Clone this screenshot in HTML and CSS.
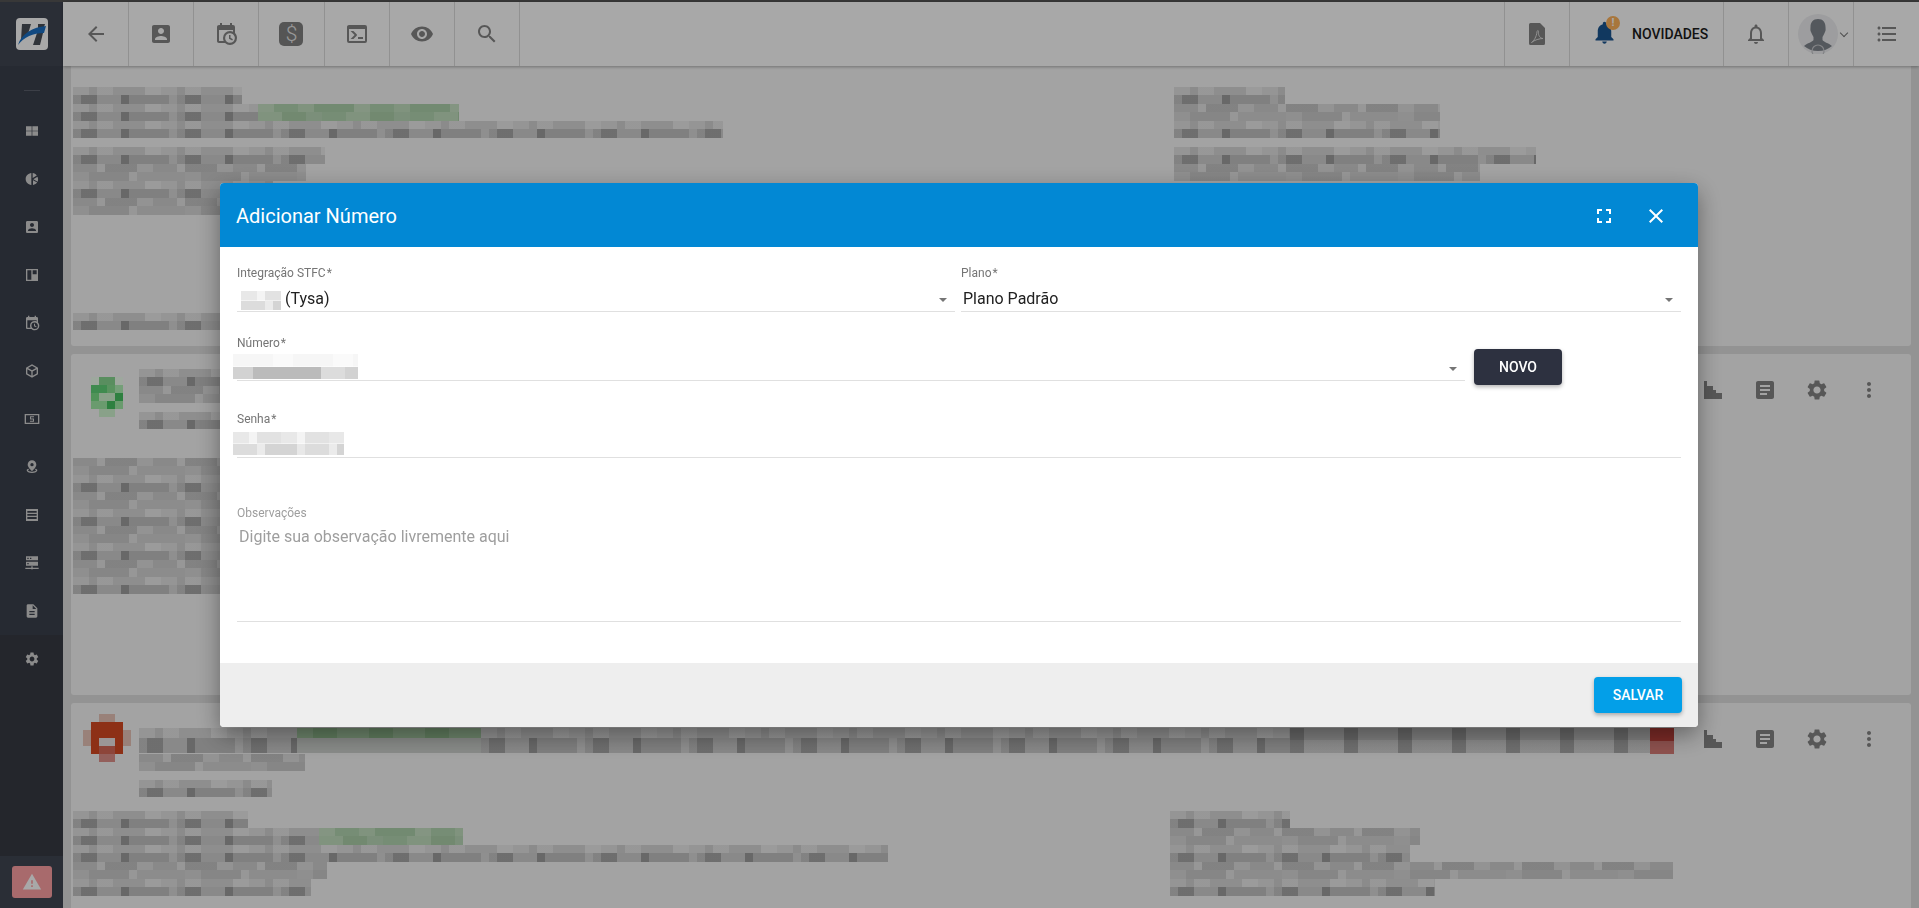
FILE: index.html
```html
<!DOCTYPE html>
<html lang="pt-BR">
<head>
    <meta charset="UTF-8">
    <title>Adicionar Número</title>
    <link rel="stylesheet" href="styles.css">
</head>
<body>
    <svg class="sprite" xmlns="http://www.w3.org/2000/svg">
        <symbol id="i-back" viewBox="0 0 24 24"><path d="M20 11H7.83l5.59-5.59L12 4l-8 8 8 8 1.41-1.41L7.83 13H20v-2z"/></symbol>
        <symbol id="i-contact" viewBox="0 0 24 24"><path d="M3 5v14c0 1.1.89 2 2 2h14c1.1 0 2-.9 2-2V5c0-1.1-.9-2-2-2H5c-1.11 0-2 .9-2 2zm12 4c0 1.66-1.34 3-3 3s-3-1.34-3-3 1.34-3 3-3 3 1.34 3 3zm-9 8c0-2 4-3.1 6-3.1s6 1.1 6 3.1v1H6v-1z"/></symbol>
        <symbol id="i-calendar" viewBox="0 0 24 24"><path d="M15,13H16.5V15.82L18.94,17.23L18.19,18.53L15,16.69V13M19,8H5V19H9.67C9.24,18.09 9,17.07 9,16A7,7 0 0,1 16,9C17.07,9 18.09,9.24 19,9.67V8M5,21C3.89,21 3,20.1 3,19V5C3,3.89 3.89,3 5,3H6V1H8V3H16V1H18V3H19A2,2 0 0,1 21,5V11.1C22.24,12.36 23,14.09 23,16A7,7 0 0,1 16,23C14.09,23 12.36,22.24 11.1,21H5M16,11.15A4.85,4.85 0 0,0 11.15,16C11.15,18.68 13.32,20.85 16,20.85A4.85,4.85 0 0,0 20.85,16C20.85,13.32 18.68,11.15 16,11.15Z"/></symbol>
        <symbol id="i-console" viewBox="0 0 24 24"><path d="M20,19V7H4V19H20M20,3A2,2 0 0,1 22,5V19A2,2 0 0,1 20,21H4A2,2 0 0,1 2,19V5C2,3.89 2.9,3 4,3H20M13,17V15H18V17H13M9.58,13L5.57,9H8.4L11.7,12.3C12.09,12.69 12.09,13.33 11.7,13.72L8.42,17H5.59L9.58,13Z"/></symbol>
        <symbol id="i-eye" viewBox="0 0 24 24"><path d="M12 4.5C7 4.5 2.73 7.61 1 12c1.73 4.39 6 7.5 11 7.5s9.27-3.11 11-7.5c-1.73-4.39-6-7.5-11-7.5zM12 17c-2.76 0-5-2.24-5-5s2.24-5 5-5 5 2.24 5 5-2.24 5-5 5zm0-8c-1.66 0-3 1.34-3 3s1.34 3 3 3 3-1.34 3-3-1.34-3-3-3z"/></symbol>
        <symbol id="i-search" viewBox="0 0 24 24"><path d="M15.5 14h-.79l-.28-.27C15.41 12.59 16 11.11 16 9.5 16 5.91 13.09 3 9.5 3S3 5.91 3 9.5 5.91 16 9.5 16c1.61 0 3.09-.59 4.23-1.57l.27.28v.79l5 4.99L20.49 19l-4.99-5zm-6 0C7.01 14 5 11.99 5 9.5S7.01 5 9.5 5 14 7.01 14 9.5 11.99 14 9.5 14z"/></symbol>
        <symbol id="i-pdf" viewBox="0 0 24 24"><path d="M15 1H5.500A1.500 1.500 0 0 0 4 2.500v19A1.500 1.500 0 0 0 5.500 23h13a1.500 1.500 0 0 0 1.500-1.500V6l-5-5z"/><path d="M6.500 20.500c2.500-1.500 5-6 5.500-10.500.2-2 1.800-2 1.500.5-.4 3 2 6 4.500 6-3.500 0-8.500 1.500-11.500 4z" fill="none" stroke="#dedede" stroke-width="1"/></symbol>
        <symbol id="i-bell-o" viewBox="0 0 24 24"><path d="M12 22c1.100 0 2-.9 2-2h-4c0 1.100.9 2 2 2zm6-6v-5c0-3.070-1.630-5.640-4.500-6.320V4c0-.83-.67-1.500-1.500-1.500s-1.500.67-1.500 1.500v.68C7.640 5.360 6 7.920 6 11v5l-2 2v1h16v-1l-2-2zm-2 1H8v-6c0-2.480 1.510-4.500 4-4.500s4 2.020 4 4.500v6z"/></symbol>
        <symbol id="i-bell" viewBox="0 0 24 24"><path d="M12 22c1.100 0 2-.9 2-2h-4c0 1.100.9 2 2 2zm6-6v-5c0-3.070-1.640-5.640-4.500-6.320V4c0-.83-.67-1.500-1.500-1.500s-1.500.67-1.500 1.500v.68C7.630 5.360 6 7.920 6 11v5l-2 2v1h16v-1l-2-2z"/></symbol>
        <symbol id="i-list" viewBox="0 0 24 24"><path d="M4 10.500c-.83 0-1.500.67-1.500 1.500s.67 1.500 1.500 1.500 1.500-.67 1.500-1.500-.67-1.500-1.500-1.500zm0-6c-.83 0-1.500.67-1.500 1.500S3.170 7.500 4 7.500 5.500 6.830 5.500 6 4.830 4.500 4 4.500zm0 12c-.83 0-1.500.68-1.500 1.500s.68 1.500 1.500 1.500 1.500-.68 1.500-1.500-.67-1.500-1.500-1.500zM7 19h14v-2H7v2zm0-6h14v-2H7v2zm0-8v2h14V5H7z"/></symbol>
        <symbol id="i-full" viewBox="0 0 24 24"><path d="M7 14H5v5h5v-2H7v-3zm-2-4h2V7h3V5H5v5zm12 7h-3v2h5v-5h-2v3zM14 5v2h3v3h2V5h-5z"/></symbol>
        <symbol id="i-close" viewBox="0 0 24 24"><path d="M19 6.410L17.590 5 12 10.590 6.410 5 5 6.410 10.590 12 5 17.590 6.410 19 12 13.410 17.590 19 19 17.590 13.410 12z"/></symbol>
        <symbol id="i-grid" viewBox="0 0 24 24"><path d="M3 5h8.500v6.500H3zM12.500 5H21v6.500h-8.500zM3 12.500h8.500V19H3zM12.500 12.500H21V19h-8.500z"/></symbol>
        <symbol id="i-pie" viewBox="0 0 24 24"><path d="M11 3v18c-4.800-.5-8.500-4.300-8.500-9S6.200 3.500 11 3zm2 0v7.500l6.200-3.600C17.700 4.700 15.500 3.300 13 3zm7.200 5.700L14 12.200l6.500 3.800c.9-2.300.8-5-.3-7.300zM13.500 14v7c2.700-.3 5-1.800 6.300-3.600z"/></symbol>
        <symbol id="i-quilt" viewBox="0 0 24 24"><path fill-rule="evenodd" d="M3 3h18v18H3zM5 5v14h6V5zM13 5v6h6V5z"/></symbol>
        <symbol id="i-cube" viewBox="0 0 24 24"><path d="M21,16.500C21,16.880 20.790,17.210 20.470,17.380L12.570,21.820C12.410,21.940 12.210,22 12,22C11.790,22 11.590,21.940 11.430,21.820L3.530,17.380C3.210,17.210 3,16.880 3,16.500V7.500C3,7.120 3.210,6.790 3.530,6.620L11.430,2.180C11.590,2.060 11.790,2 12,2C12.210,2 12.410,2.060 12.570,2.180L20.470,6.620C20.790,6.790 21,7.120 21,7.500V16.500M12,4.150L6.040,7.500L12,10.850L17.960,7.500L12,4.150M5,15.910L11,19.290V12.580L5,9.210V15.910M19,15.910V9.210L13,12.580V19.290L19,15.910Z"/></symbol>
        <symbol id="i-cash" viewBox="0 0 24 24"><path fill-rule="evenodd" d="M1 4.500h22v15H1zM3 6.500v11h18v-11z"/><path d="M9 8h6v1.500h-4.500v1.700H15V16H9v-1.500h4.500v-1.800H9z"/></symbol>
        <symbol id="i-pin" viewBox="0 0 24 24"><path fill-rule="evenodd" d="M12 2a6.500 6.500 0 0 1 6.500 6.500c0 4-6.500 9.500-6.500 9.500S5.500 12.500 5.500 8.500A6.500 6.500 0 0 1 12 2zm0 4a2.500 2.500 0 1 0 0 5 2.500 2.500 0 0 0 0-5z"/><path d="M4 17c0-1 1-1.800 2.500-2.300l1 1.300C6.500 16.300 6 16.700 6 17c0 .9 2.700 2 6 2s6-1.100 6-2c0-.3-.5-.7-1.500-1l1-1.300C19 15.200 20 16 20 17c0 2.500-3.600 4-8 4s-8-1.500-8-4z"/></symbol>
        <symbol id="i-rows" viewBox="0 0 24 24"><path fill-rule="evenodd" d="M3 3h18v18H3zM5 6v2.500h14V6zM5 10.500V13h14v-2.500zM5 15v3h14v-3z"/></symbol>
        <symbol id="i-server" viewBox="0 0 24 24"><path fill-rule="evenodd" d="M3 2h18v6H3zM5 4v2h2V4zM9 4v2h2V4zM3 10h18v6H3zM5 12v2h2v-2z"/><path d="M11 17h2v2h9v2h-9.500v1h-1v-1H2v-2h9z"/></symbol>
        <symbol id="i-doc" viewBox="0 0 24 24"><path d="M14 2H6c-1.100 0-2 .9-2 2v16c0 1.100.9 2 2 2h12c1.100 0 2-.9 2-2V8l-6-6zm2 16H8v-2h8v2zm0-4H8v-2h8v2zm-3-5V3.500L18.500 9H13z"/></symbol>
        <symbol id="i-gear" viewBox="0 0 24 24"><path d="M19.140 12.940c.04-.3.06-.61.06-.94 0-.32-.02-.64-.07-.94l2.030-1.580a.49.49 0 0 0 .12-.61l-1.920-3.320a.488.488 0 0 0-.59-.22l-2.390.96c-.5-.38-1.030-.7-1.620-.94l-.36-2.540a.484.484 0 0 0-.48-.41h-3.840c-.24 0-.43.17-.47.41l-.36 2.540c-.59.24-1.130.57-1.620.94l-2.390-.96c-.22-.08-.47 0-.59.22L2.740 8.870c-.12.21-.08.47.12.61l2.030 1.580c-.05.3-.09.63-.09.94s.02.64.07.94l-2.030 1.580a.49.49 0 0 0-.12.61l1.920 3.320c.12.22.37.29.59.22l2.390-.96c.5.38 1.030.7 1.620.94l.36 2.540c.05.24.24.41.48.41h3.840c.24 0 .44-.17.47-.41l.36-2.540c.59-.24 1.130-.56 1.620-.94l2.390.96c.22.08.47 0 .59-.22l1.920-3.320c.12-.22.07-.47-.12-.61l-2.010-1.580zM12 15.600c-1.980 0-3.600-1.620-3.600-3.600s1.620-3.600 3.600-3.600 3.600 1.620 3.600 3.600-1.620 3.600-3.600 3.600z"/></symbol>
        <symbol id="i-warn" viewBox="0 0 24 24"><path d="M1 21h22L12 2 1 21zm12-3h-2v-2h2v2zm0-4h-2v-4h2v4z"/></symbol>
        <symbol id="i-note" viewBox="0 0 24 24"><path d="M19 3H5c-1.100 0-2 .9-2 2v14c0 1.100.9 2 2 2h14c1.100 0 2-.9 2-2V5c0-1.100-.9-2-2-2zm-5 14H7v-2h7v2zm3-4H7v-2h10v2zm0-4H7V7h10v2z"/></symbol>
        <symbol id="i-steps" viewBox="0 0 24 24"><path d="M3 3h3v5h6v4h3v3h6v6H3z"/></symbol>
        <symbol id="i-more" viewBox="0 0 24 24"><path d="M12 8c1.100 0 2-.9 2-2s-.9-2-2-2-2 .9-2 2 .9 2 2 2zm0 2c-1.100 0-2 .9-2 2s.9 2 2 2 2-.9 2-2-.9-2-2-2zm0 6c-1.100 0-2 .9-2 2s.9 2 2 2 2-.9 2-2-.9-2-2-2z"/></symbol>
    </svg>

    <div class="topline"></div>
    <div class="shell">
        <!-- Sidebar -->
        <aside class="sidebar">
            <div class="brand">
                <div class="logo">
                    <svg viewBox="0 0 32 32" width="32" height="32">
                        <path d="M6 6h9l-3 10-7 6zM22 6h7l-1 3-6 3zM21 15h6l-3 12h-7z" fill="#4a4f58"/>
                        <path d="M2 27C5 16 17 9 30 8l-2 7C17 15 8 19 2 27z" fill="#1a6fc4"/>
                    </svg>
                </div>
            </div>
            <div class="side-rule"></div>
            <nav class="side-nav">
                <a class="side-item"><svg><use href="#i-grid"/></svg></a>
                <a class="side-item"><svg><use href="#i-pie"/></svg></a>
                <a class="side-item"><svg><use href="#i-contact"/></svg></a>
                <a class="side-item"><svg><use href="#i-quilt"/></svg></a>
                <a class="side-item"><svg><use href="#i-calendar"/></svg></a>
                <a class="side-item"><svg><use href="#i-cube"/></svg></a>
                <a class="side-item"><svg><use href="#i-cash"/></svg></a>
                <a class="side-item"><svg><use href="#i-pin"/></svg></a>
                <a class="side-item"><svg><use href="#i-rows"/></svg></a>
                <a class="side-item"><svg><use href="#i-server"/></svg></a>
                <a class="side-item"><svg><use href="#i-doc"/></svg></a>
            </nav>
            <div class="side-low">
                <a class="side-item"><svg><use href="#i-gear"/></svg></a>
            </div>
            <div class="side-foot">
                <div class="alert-btn"><svg><use href="#i-warn"/></svg></div>
            </div>
        </aside>

        <div class="main">
            <!-- Toolbar -->
            <header class="toolbar">
                <a class="tool"><svg><use href="#i-back"/></svg></a>
                <a class="tool"><svg><use href="#i-contact"/></svg></a>
                <a class="tool"><svg><use href="#i-calendar"/></svg></a>
                <a class="tool"><span class="dollar">$</span></a>
                <a class="tool"><svg><use href="#i-console"/></svg></a>
                <a class="tool"><svg><use href="#i-eye"/></svg></a>
                <a class="tool"><svg><use href="#i-search"/></svg></a>
                <div class="tool-right">
                    <a class="tool tool-first"><svg><use href="#i-pdf"/></svg></a>
                    <a class="tool tool-news">
                        <span class="news-bell">
                            <svg><use href="#i-bell"/></svg>
                            <span class="news-badge">!</span>
                        </span>
                        <span class="news-text">NOVIDADES</span>
                    </a>
                    <a class="tool"><svg><use href="#i-bell-o"/></svg></a>
                    <a class="tool tool-user">
                        <svg class="avatar" viewBox="0 0 40 40" width="40" height="40">
                            <circle cx="20" cy="20" r="20" fill="#eeeff1"/>
                            <path d="M20 5c5 0 7.500 3.500 7.500 8 0 2 .5 3-.5 5-.7 1.500-1.500 3.500-2.500 5v3c1 2 6 3 9.500 6-3.500 3-8.500 5-14 5s-10.500-2-14-5c3.500-3 8.500-4 9.500-6v-3c-1-1.500-1.800-3.500-2.500-5-1-2-.5-3-.5-5 0-4.500 2.500-8 7.500-8z" fill="#80868e"/>
                            <circle cx="20" cy="37" r="6" fill="none" stroke="#c6c8cc" stroke-width="1.200"/>
                        </svg>
                        <span class="chev"></span>
                    </a>
                    <a class="tool"><svg><use href="#i-list"/></svg></a>
                </div>
            </header>

            <!-- Cards behind the dialog, content is pixelated -->
            <div class="cards">
                <section class="card card-one">
                    <div class="columns">
                        <div>
                            <div class="group">
                                <div class="ln w169"></div>
                                <div class="row"><div class="ln w185"></div><div class="ln gr w201"></div></div>
                                <div class="ln w650"></div>
                            </div>
                            <div class="group">
                                <div class="ln w252"></div>
                                <div class="ln w233"></div>
                                <div class="ln w200"></div>
                                <div class="ln w233"></div>
                            </div>
                            <div class="foot-line"><div class="ln w169"></div></div>
                        </div>
                        <div>
                            <div class="group">
                                <div class="ln w111"></div>
                                <div class="ln w266"></div>
                                <div class="ln w266"></div>
                            </div>
                            <div class="group">
                                <div class="ln w362"></div>
                                <div class="ln w306"></div>
                            </div>
                        </div>
                    </div>
                </section>

                <section class="card card-two">
                    <div class="card-head">
                        <svg class="thumb" viewBox="0 0 32 40" width="32" height="40">
                            <rect x="0" y="0" width="8" height="8" fill="#f0fff0"/>
                            <rect x="8" y="0" width="16" height="8" fill="#88d890"/>
                            <rect x="24" y="0" width="8" height="8" fill="#f0fff0"/>
                            <rect x="0" y="8" width="16" height="8" fill="#60d478"/>
                            <rect x="16" y="8" width="8" height="8" fill="#88e090"/>
                            <rect x="24" y="8" width="8" height="8" fill="#b0f2b6"/>
                            <rect x="0" y="16" width="8" height="8" fill="#7cdf88"/>
                            <rect x="8" y="16" width="16" height="8" fill="#d1f5d1"/>
                            <rect x="24" y="16" width="8" height="8" fill="#47c261"/>
                            <rect x="0" y="24" width="16" height="8" fill="#a1eca7"/>
                            <rect x="16" y="24" width="8" height="8" fill="#47c261"/>
                            <rect x="24" y="24" width="8" height="8" fill="#a1eca7"/>
                            <rect x="8" y="32" width="16" height="8" fill="#d1f5d1"/>
                        </svg>
                        <div class="head-text">
                            <div class="ln w300"></div>
                            <div class="ln w300"></div>
                            <div class="ln w300 gap9"></div>
                        </div>
                        <div class="card-actions">
                            <a><svg><use href="#i-steps"/></svg></a>
                            <a><svg><use href="#i-note"/></svg></a>
                            <a><svg><use href="#i-gear"/></svg></a>
                            <a><svg><use href="#i-more"/></svg></a>
                        </div>
                    </div>
                    <div class="ln w300"></div>
                    <div class="ln w300"></div>
                    <div class="ln w300"></div>
                    <div class="ln w300"></div>
                    <div class="ln w300"></div>
                    <div class="ln w300"></div>
                    <div class="ln w300"></div>
                    <div class="ln w300"></div>
                </section>

                <section class="card card-three">
                    <div class="card-head">
                        <svg class="thumb thumb-red" viewBox="0 0 48 48" width="48" height="48">
                            <rect x="16" width="16" height="48" fill="#e8c4b8"/>
                            <rect y="16" width="48" height="16" fill="#e8c4b8"/>
                            <rect x="8" y="8" width="32" height="32" fill="#d64a22"/>
                            <rect x="16" y="24" width="16" height="8" fill="#ece4e4"/>
                            <rect x="16" y="32" width="16" height="8" fill="#d66a58"/>
                            <rect x="16" y="40" width="16" height="8" fill="#e0908a"/>
                        </svg>
                        <div class="head-text head-text-wide">
                            <div class="row">
                                <div class="ln ln-tall w158"></div>
                                <div class="ln ln-tall gr w184"></div>
                                <div class="ln ln-tall w809"></div>
                                <div class="bars"></div>
                                <div class="red-box"></div>
                            </div>
                            <div class="ln w166"></div>
                            <div class="ln w133 gap9"></div>
                        </div>
                        <div class="card-actions">
                            <a><svg><use href="#i-steps"/></svg></a>
                            <a><svg><use href="#i-note"/></svg></a>
                            <a><svg><use href="#i-gear"/></svg></a>
                            <a><svg><use href="#i-more"/></svg></a>
                        </div>
                    </div>
                    <div class="columns columns-low">
                        <div>
                            <div class="ln w175"></div>
                            <div class="row"><div class="ln w246"></div><div class="ln gr w144"></div></div>
                            <div class="ln w815"></div>
                            <div class="ln w254"></div>
                            <div class="ln w238"></div>
                        </div>
                        <div>
                            <div class="ln w120"></div>
                            <div class="ln w250"></div>
                            <div class="ln w240"></div>
                            <div class="ln w503"></div>
                            <div class="ln w265"></div>
                        </div>
                    </div>
                </section>
            </div>
        </div>
    </div>

    <div class="backdrop"></div>

    <!-- Dialog -->
    <div class="dialog">
        <div class="dialog-head">
            <h2>Adicionar Número</h2>
            <a class="dialog-icon"><svg><use href="#i-full"/></svg></a>
            <a class="dialog-icon"><svg><use href="#i-close"/></svg></a>
        </div>
        <div class="dialog-body">
            <div class="form-row">
                <div class="field">
                    <label>Integração STFC <span class="req">*</span></label>
                    <div class="control">
                        <span class="hide hide-name"></span>
                        <span class="value">(Tysa)</span>
                        <span class="caret"></span>
                    </div>
                </div>
                <div class="field">
                    <label>Plano <span class="req">*</span></label>
                    <div class="control">
                        <span class="value value-plain">Plano Padrão</span>
                        <span class="caret"></span>
                    </div>
                </div>
            </div>
            <div class="form-row-number">
                <div class="field field-grow">
                    <label>Número <span class="req">*</span></label>
                    <div class="control">
                        <span class="hide hide-number"></span>
                        <span class="caret"></span>
                    </div>
                </div>
                <button class="btn btn-dark">NOVO</button>
            </div>
            <div class="field field-pass">
                <label>Senha <span class="req">*</span></label>
                <div class="control">
                    <span class="hide hide-pass"></span>
                </div>
            </div>
            <div class="field field-notes">
                <label class="label-off">Observações</label>
                <textarea placeholder="Digite sua observação livremente aqui"></textarea>
            </div>
        </div>
        <div class="dialog-foot">
            <button class="btn btn-save">SALVAR</button>
        </div>
    </div>
</body>
</html>
```

FILE: styles.css
```css
* {
    box-sizing: border-box;
}

html, body {
    height: 100%;
}

body {
    margin: 0;
    overflow: hidden;
    font-family: Roboto, "Liberation Sans", sans-serif;
    background: #e0e0e0;
}

.sprite {
    display: none;
}

.topline {
    height: 2px;
    background: #555;
}

.shell {
    display: flex;
    height: 906px;
}

/* Sidebar */
.sidebar {
    width: 63px;
    flex: none;
    display: flex;
    flex-direction: column;
    background: #3b404d;
}

.brand {
    height: 64px;
    flex: none;
    display: flex;
    align-items: center;
    justify-content: center;
    background: #414653;
}

.logo {
    width: 32px;
    height: 32px;
    border-radius: 4px;
    background: #fff;
}

.logo svg {
    display: block;
}

.side-rule {
    width: 16px;
    height: 1px;
    flex: none;
    margin: 24px auto 16px;
    background: #5b606c;
}

.side-item {
    height: 48px;
    flex: none;
    display: flex;
    align-items: center;
    justify-content: center;
}

.side-item svg {
    width: 16px;
    height: 16px;
    fill: #d4d4d4;
}

.side-low {
    flex: 1;
    background: #383a44;
}

.side-foot {
    height: 52px;
    flex: none;
    padding: 10px 12px;
    background: #414653;
}

.alert-btn {
    width: 40px;
    height: 32px;
    display: flex;
    align-items: center;
    justify-content: center;
    border-radius: 3px;
    background: #ffa2a5;
}

.alert-btn svg {
    width: 20px;
    height: 20px;
    fill: #fff;
}

/* Toolbar */
.main {
    flex: 1;
    min-width: 0;
}

.toolbar {
    height: 64px;
    display: flex;
    padding-left: 1px;
    background: #fff;
    box-shadow: 0 1px 3px rgba(0,0,0,.3);
    position: relative;
}

.tool {
    width: 65.15px;
    display: flex;
    align-items: center;
    justify-content: center;
    border-right: 1px solid #dcdcdc;
}

.tool svg {
    width: 24px;
    height: 24px;
    fill: #858585;
}

.dollar {
    width: 24px;
    height: 24px;
    border-radius: 5px;
    background: #828282;
    color: #e8e8e8;
    font-size: 21px;
    font-weight: 300;
    line-height: 24px;
    text-align: center;
}

.tool-right {
    margin-left: auto;
    display: flex;
}

.tool-right .tool {
    width: 65px;
}

.tool-right .tool:last-child {
    border-right: 0;
}

.tool-right .tool-first {
    width: 66px;
    border-left: 1px solid #dcdcdc;
}

.tool-right .tool-news {
    width: 154px;
    justify-content: flex-start;
    padding-left: 21px;
}

.news-bell {
    position: relative;
    width: 27px;
    height: 27px;
    margin-top: -3px;
}

.tool .news-bell svg {
    width: 27px;
    height: 27px;
    fill: #1a5590;
}

.news-badge {
    position: absolute;
    top: -3px;
    left: 15px;
    width: 14px;
    height: 14px;
    border-radius: 50%;
    background: #ffb35c;
    color: #fff;
    font-size: 11px;
    font-weight: 700;
    line-height: 14px;
    text-align: center;
}

.news-text {
    margin-left: 14px;
    margin-top: -1px;
    font-size: 14px;
    font-weight: 500;
    color: #1c1c1c;
}

.tool-user {
    gap: 2px;
    padding-left: 5px;
    justify-content: flex-start;
}

.tool .avatar {
    width: 40px;
    height: 40px;
    fill: none;
    margin-left: 4px;
}

.chev {
    width: 6px;
    height: 6px;
    margin: -3px 0 0 1px;
    border-right: 1px solid #777;
    border-bottom: 1px solid #777;
    transform: rotate(45deg);
}

/* Pixelated cards */
.cards {
    padding: 0 8px;
    height: 842px;
    overflow: hidden;
}

.card {
    background: #f8f8f8;
    border-radius: 0 0 3px 3px;
    margin-bottom: 8px;
    padding-left: 2px;
    overflow: hidden;
}

.card-one {
    height: 280px;
    padding-top: 21px;
}

.card-two {
    height: 341px;
    border-radius: 3px;
}

.card-three {
    height: 300px;
    border-radius: 3px;
}

.columns {
    display: grid;
    grid-template-columns: 1101px 1fr;
}

.columns-low {
    grid-template-columns: 1097px 1fr;
    padding-top: 4px;
}

.group {
    margin-bottom: 9px;
}

.foot-line {
    margin-top: 98px;
}

.row {
    display: flex;
}

.ln {
    height: 17px;
    background-image:
        repeating-linear-gradient(90deg, rgba(0,0,0,.09) 0 16px, rgba(0,0,0,.15) 16px 24px, rgba(0,0,0,.07) 24px 40px, rgba(0,0,0,.13) 40px 72px, rgba(0,0,0,.05) 72px 88px),
        repeating-linear-gradient(90deg, rgba(0,0,0,.2) 0 8px, rgba(0,0,0,.32) 8px 24px, rgba(0,0,0,.16) 24px 48px, rgba(0,0,0,.36) 48px 56px, rgba(0,0,0,.22) 56px 96px, rgba(0,0,0,.12) 96px 104px);
    background-size: 100% 8px, 100% 9px;
    background-position: 0 0, 0 8px;
    background-repeat: no-repeat;
}

.ln:nth-child(2n) {
    background-image:
        repeating-linear-gradient(90deg, rgba(0,0,0,.16) 0 24px, rgba(0,0,0,.08) 24px 32px, rgba(0,0,0,.2) 32px 64px, rgba(0,0,0,.1) 64px 80px),
        repeating-linear-gradient(90deg, rgba(0,0,0,.12) 0 16px, rgba(0,0,0,.18) 16px 56px, rgba(0,0,0,.08) 56px 64px, rgba(0,0,0,.14) 64px 112px);
}

.ln.gr {
    background-image:
        repeating-linear-gradient(90deg, #c9e3c6 0 16px, #b4d6b2 16px 40px, #c2dfc0 40px 56px, #aed2ac 56px 96px),
        repeating-linear-gradient(90deg, #c2dfc0 0 24px, #add1ab 24px 48px, #bbdab9 48px 64px, #b4d6b2 64px 88px);
}

.ln-tall {
    height: 25px;
    background-size: 100% 10px, 100% 15px;
    background-position: 0 0, 0 10px;
}

.row .gr.ln-tall {
    background-image:
        repeating-linear-gradient(90deg, #a8cda5 0 16px, #94c091 16px 40px, #a8cda5 40px 56px),
        repeating-linear-gradient(90deg, #d0d4d0, #d0d4d0);
}

.bars {
    width: 360px;
    height: 25px;
    background:
        repeating-linear-gradient(90deg, rgba(0,0,0,.3) 0 14px, rgba(0,0,0,.12) 14px 54px),
        repeating-linear-gradient(180deg, rgba(0,0,0,.1) 0 12px, rgba(0,0,0,.02) 12px 25px);
}

.red-box {
    width: 24px;
    height: 26px;
    background: linear-gradient(180deg, #c0423c 0 50%, #d97d78 50%);
}

.w111 { width: 111px; }
.w120 { width: 120px; }
.w133 { width: 133px; }
.w144 { width: 144px; }
.w158 { width: 158px; }
.w166 { width: 166px; }
.w169 { width: 169px; }
.w175 { width: 175px; }
.w184 { width: 184px; }
.w185 { width: 185px; }
.w200 { width: 200px; }
.w201 { width: 201px; }
.w233 { width: 233px; }
.w238 { width: 238px; }
.w240 { width: 240px; }
.w246 { width: 246px; }
.w250 { width: 250px; }
.w252 { width: 252px; }
.w254 { width: 254px; }
.w265 { width: 265px; }
.w266 { width: 266px; }
.w300 { width: 300px; }
.w306 { width: 306px; }
.w362 { width: 362px; }
.w503 { width: 503px; }
.w650 { width: 650px; }
.w809 { width: 809px; }
.w815 { width: 815px; }

.gap9 {
    margin-top: 9px;
}

.card-head {
    display: flex;
    align-items: flex-start;
    height: 104px;
    padding-left: 18px;
}

.thumb {
    flex: none;
    margin-top: 23px;
}

.thumb-red {
    margin-top: 11px;
    margin-left: -8px;
}

.head-text {
    flex: none;
    margin-left: 16px;
    margin-top: 15px;
}

.head-text-wide {
    margin-top: 25px;
    margin-left: 8px;
}

.card-actions {
    margin-left: auto;
    display: flex;
    padding-right: 16px;
    margin-top: 24px;
}

.card-actions a {
    width: 52px;
    height: 24px;
    display: flex;
    justify-content: center;
}

.card-actions svg {
    width: 24px;
    height: 24px;
    fill: #858585;
}

/* Dialog */
.backdrop {
    position: fixed;
    inset: 0;
    background: rgba(0,0,0,.34);
}

.dialog {
    position: fixed;
    left: 220px;
    top: 183px;
    width: 1478px;
    height: 544px;
    display: flex;
    flex-direction: column;
    background: #fff;
    border-radius: 4px;
    overflow: hidden;
    box-shadow: 0 8px 24px rgba(0,0,0,.4);
}

.dialog-head {
    height: 64px;
    flex: none;
    display: flex;
    align-items: center;
    padding: 2px 16px 0;
    background: #0288d4;
    color: #fff;
}

.dialog-head h2 {
    flex: 1;
    margin: 0;
    font-size: 20px;
    font-weight: 400;
}

.dialog-icon {
    width: 52px;
    height: 24px;
    display: flex;
    justify-content: center;
}

.dialog-icon svg {
    width: 24px;
    height: 24px;
    fill: #fff;
}

.dialog-body {
    flex: 1;
    padding: 19px 17px 0;
}

.form-row {
    display: grid;
    grid-template-columns: 718px 720px;
    gap: 6px;
    margin-bottom: 24px;
}

.form-row-number {
    display: flex;
    gap: 9px;
    margin-bottom: 27px;
}

.field-grow {
    width: 1228px;
}

.field-grow .control {
    height: 31px;
}

.field label {
    display: block;
    height: 14px;
    font-size: 12px;
    line-height: 14px;
    color: #757575;
}

.field label.label-off {
    color: #9e9e9e;
}

.req {
    margin-left: -2px;
}

.control {
    height: 32px;
    display: flex;
    align-items: flex-end;
    border-bottom: 1px solid #e0e0e0;
}

.value {
    font-size: 16px;
    line-height: 24px;
    color: #212121;
    margin-left: 4px;
}

.value-plain {
    margin-left: 2px;
}

.caret {
    margin-left: auto;
    margin-right: 8px;
    margin-bottom: 9px;
    width: 0;
    height: 0;
    border-left: 4px solid transparent;
    border-right: 4px solid transparent;
    border-top: 4px solid #757575;
}

.hide {
    display: block;
    height: 25px;
    margin-bottom: 1px;
    margin-left: -4px;
    background-image:
        repeating-linear-gradient(90deg, #e8e8e8 0 16px, #f4f4f4 16px 24px, #e2e2e2 24px 48px),
        repeating-linear-gradient(90deg, #dcdcdc 0 24px, #ebebeb 24px 32px, #d4d4d4 32px 64px, #e8e8e8 64px 72px);
    background-size: 100% 50%;
    background-position: 0 0, 0 100%;
    background-repeat: no-repeat;
}

.hide-name {
    width: 40px;
    height: 19px;
    margin-left: 4px;
}

.hide-number {
    width: 125px;
    background-image:
        repeating-linear-gradient(90deg, #f6f6f6 0 40px, #fafafa 40px 60px),
        repeating-linear-gradient(90deg, #d2d2d2 0 20px, #bbb 20px 88px, #dcdcdc 88px 112px);
}

.hide-pass {
    width: 111px;
    height: 23px;
    margin-bottom: 2px;
}

.field-pass {
    margin-bottom: 48px;
}

.field-notes textarea {
    display: block;
    width: 100%;
    height: 102px;
    padding: 5px 2px 0;
    border: 0;
    border-bottom: 1px solid #e0e0e0;
    outline: 0;
    resize: none;
    font-family: Roboto, "Liberation Sans", sans-serif;
    font-size: 16px;
    line-height: 24px;
}

.field-notes textarea::placeholder {
    color: #9e9e9e;
}

.btn {
    width: 88px;
    height: 36px;
    border: 0;
    border-radius: 4px;
    color: #fff;
    font-family: Roboto, "Liberation Sans", sans-serif;
    font-size: 14px;
    font-weight: 500;
    box-shadow: 0 2px 4px rgba(0,0,0,.3);
}

.btn-dark {
    margin-top: 13px;
    background: #2d3140;
}

.btn-save {
    background: #039fe8;
}

.dialog-foot {
    height: 64px;
    flex: none;
    display: flex;
    align-items: center;
    justify-content: flex-end;
    padding-right: 16px;
    background: #eeeeee;
}
```
